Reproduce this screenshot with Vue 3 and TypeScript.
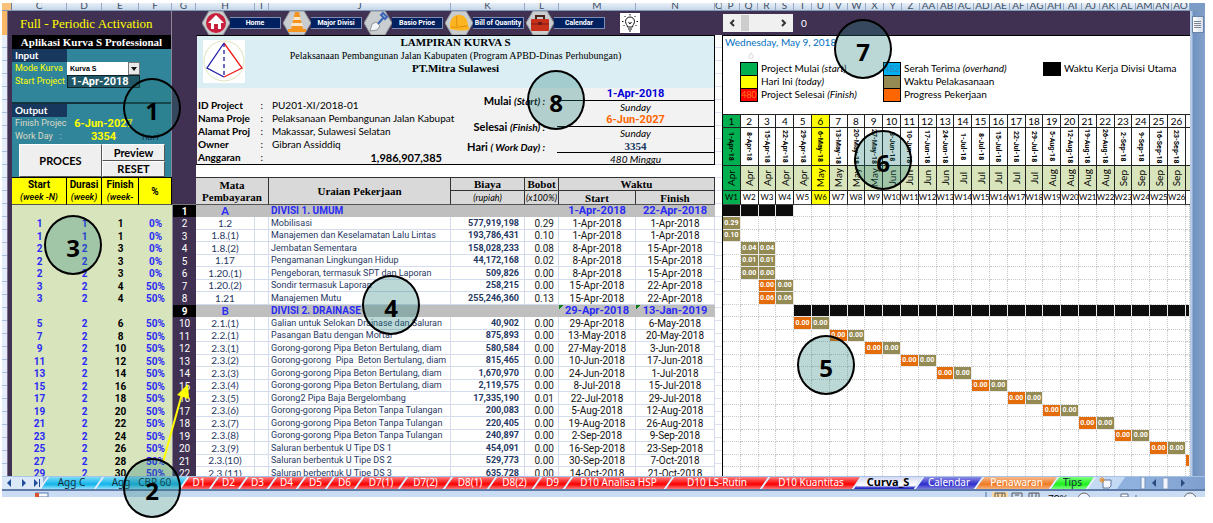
<script setup lang="ts">
import { ref } from 'vue'

interface Row {
  no: number
  start?: number
  weeks?: number
  finish?: number
  pct?: string
  code: string
  name: string
  cost?: string
  weight?: string
  from: string
  to: string
  division?: boolean
  flagged?: boolean
}

const pipe = 'Gorong-gorong Pipa Beton Bertulang, diam'
const plainPipe = 'Gorong-gorong Pipa Beton Tanpa Tulangan'

const rows: Row[] = [
  { no: 1, code: 'A', name: 'DIVISI 1. UMUM', from: '1-Apr-2018', to: '22-Apr-2018', division: true },
  { no: 2, start: 1, weeks: 1, finish: 1, pct: '0%', code: '1.2', name: 'Mobilisasi', cost: '577,919,198', weight: '0.29', from: '1-Apr-2018', to: '1-Apr-2018' },
  { no: 3, start: 1, weeks: 1, finish: 1, pct: '0%', code: '1.8.(1)', name: 'Manajemen dan Keselamatan Lalu Lintas', cost: '193,786,431', weight: '0.10', from: '1-Apr-2018', to: '1-Apr-2018' },
  { no: 4, start: 2, weeks: 2, finish: 3, pct: '0%', code: '1.8.(2)', name: 'Jembatan Sementara', cost: '158,028,233', weight: '0.08', from: '8-Apr-2018', to: '15-Apr-2018' },
  { no: 5, start: 2, weeks: 2, finish: 3, pct: '0%', code: '1.17', name: 'Pengamanan Lingkungan Hidup', cost: '44,172,168', weight: '0.02', from: '8-Apr-2018', to: '15-Apr-2018' },
  { no: 6, start: 2, weeks: 2, finish: 3, pct: '0%', code: '1.20.(1)', name: 'Pengeboran, termasuk SPT dan Laporan', cost: '509,826', weight: '0.00', from: '8-Apr-2018', to: '15-Apr-2018' },
  { no: 7, start: 3, weeks: 2, finish: 4, pct: '50%', code: '1.20.(2)', name: 'Sondir termasuk Laporan', cost: '258,215', weight: '0.00', from: '15-Apr-2018', to: '22-Apr-2018' },
  { no: 8, start: 3, weeks: 2, finish: 4, pct: '50%', code: '1.21', name: 'Manajemen Mutu', cost: '255,246,360', weight: '0.13', from: '15-Apr-2018', to: '22-Apr-2018' },
  { no: 9, code: 'B', name: 'DIVISI 2. DRAINASE', from: '29-Apr-2018', to: '13-Jan-2019', division: true, flagged: true },
  { no: 10, start: 5, weeks: 2, finish: 6, pct: '50%', code: '2.1.(1)', name: 'Galian untuk Selokan Drainase dan Saluran', cost: '40,902', weight: '0.00', from: '29-Apr-2018', to: '6-May-2018' },
  { no: 11, start: 7, weeks: 2, finish: 8, pct: '50%', code: '2.2.(1)', name: 'Pasangan Batu dengan Mortar', cost: '875,893', weight: '0.00', from: '13-May-2018', to: '20-May-2018' },
  { no: 12, start: 9, weeks: 2, finish: 10, pct: '50%', code: '2.3.(1)', name: pipe, cost: '580,584', weight: '0.00', from: '27-May-2018', to: '3-Jun-2018' },
  { no: 13, start: 11, weeks: 2, finish: 12, pct: '50%', code: '2.3.(2)', name: 'Gorong-gorong  Pipa  Beton Bertulang, diam', cost: '815,465', weight: '0.00', from: '10-Jun-2018', to: '17-Jun-2018' },
  { no: 14, start: 13, weeks: 2, finish: 14, pct: '50%', code: '2.3.(3)', name: pipe, cost: '1,670,970', weight: '0.00', from: '24-Jun-2018', to: '1-Jul-2018' },
  { no: 15, start: 15, weeks: 2, finish: 16, pct: '50%', code: '2.3.(4)', name: pipe, cost: '2,119,575', weight: '0.00', from: '8-Jul-2018', to: '15-Jul-2018' },
  { no: 16, start: 17, weeks: 2, finish: 18, pct: '50%', code: '2.3.(5)', name: 'Gorong2 Pipa Baja Bergelombang', cost: '17,335,190', weight: '0.01', from: '22-Jul-2018', to: '29-Jul-2018' },
  { no: 17, start: 19, weeks: 2, finish: 20, pct: '50%', code: '2.3.(6)', name: plainPipe, cost: '200,083', weight: '0.00', from: '5-Aug-2018', to: '12-Aug-2018' },
  { no: 18, start: 21, weeks: 2, finish: 22, pct: '50%', code: '2.3.(7)', name: plainPipe, cost: '220,405', weight: '0.00', from: '19-Aug-2018', to: '26-Aug-2018' },
  { no: 19, start: 23, weeks: 2, finish: 24, pct: '50%', code: '2.3.(8)', name: plainPipe, cost: '240,897', weight: '0.00', from: '2-Sep-2018', to: '9-Sep-2018' },
  { no: 20, start: 25, weeks: 2, finish: 26, pct: '50%', code: '2.3.(9)', name: 'Saluran berbentuk U Tipe DS 1', cost: '454,091', weight: '0.00', from: '16-Sep-2018', to: '23-Sep-2018' },
  { no: 21, start: 27, weeks: 2, finish: 28, pct: '50%', code: '2.3.(10)', name: 'Saluran berbentuk U Tipe DS 2', cost: '529,773', weight: '0.00', from: '30-Sep-2018', to: '7-Oct-2018' },
  { no: 22, start: 29, weeks: 2, finish: 30, pct: '50%', code: '2.3.(11)', name: 'Saluran berbentuk U Tipe DS 3', cost: '635,728', weight: '0.00', from: '14-Oct-2018', to: '21-Oct-2018' },
]

const monthNames = ['Jan', 'Feb', 'Mar', 'Apr', 'May', 'Jun', 'Jul', 'Aug', 'Sep', 'Oct', 'Nov', 'Dec']

const weeks = Array.from({ length: 26 }, (_, i) => {
  const d = new Date(Date.UTC(2018, 3, 1 + i * 7))
  const month = monthNames[d.getUTCMonth()]
  return {
    n: i + 1,
    date: `${d.getUTCDate()}-${month}-18`,
    month,
    tone: i === 0 ? 'begin' : i === 5 ? 'today' : '',
  }
})

const shares: Record<number, string> = { 2: '0.29', 3: '0.10', 4: '0.04', 5: '0.01', 8: '0.06' }

function barKind(row: Row, week: number): string {
  if (row.no === 1) return week <= 4 ? 'main' : ''
  if (row.no === 9) return week >= 5 ? 'main' : ''
  if (row.start === undefined || row.finish === undefined) return ''
  if (week < row.start || week > row.finish) return ''
  return row.pct === '50%' && week === row.start ? 'progress' : 'plan'
}

function barText(row: Row, week: number): string {
  const kind = barKind(row, week)
  return kind === 'plan' || (kind === 'progress' && week <= 26) ? (shares[row.no] ?? '0.00') : ''
}

const weekLetters = [...'PQRSTUVWXYZ', ...[...'ABCDEFGHIJKLMNO'].map((c) => 'A' + c)]

const tabs = [
  { label: 'Agg C', kind: 'cyan', width: 55 },
  { label: 'Agg   CBR 60', kind: 'cyan', width: 85 },
  { label: 'D1', kind: 'red', width: 30 },
  { label: 'D2', kind: 'red', width: 29 },
  { label: 'D3', kind: 'red', width: 29 },
  { label: 'D4', kind: 'red', width: 29 },
  { label: 'D5', kind: 'red', width: 29 },
  { label: 'D6', kind: 'red', width: 29 },
  { label: 'D7(1)', kind: 'red', width: 44 },
  { label: 'D7(2)', kind: 'red', width: 45 },
  { label: 'D8(1)', kind: 'red', width: 44 },
  { label: 'D8(2)', kind: 'red', width: 45 },
  { label: 'D9', kind: 'red', width: 31 },
  { label: 'D10 Analisa HSP', kind: 'red', width: 101 },
  { label: 'D10 LS-Rutin', kind: 'red', width: 96 },
  { label: 'D10 Kuantitas', kind: 'red', width: 92 },
  { label: 'Curva_S', kind: 'current', width: 62 },
  { label: 'Calendar', kind: 'blue', width: 60 },
  { label: 'Penawaran', kind: 'orange', width: 75 },
  { label: 'Tips', kind: 'green', width: 37 },
]

const callouts = [
  { n: 1, x: 152, y: 108 },
  { n: 2, x: 152, y: 488 },
  { n: 3, x: 73, y: 245 },
  { n: 4, x: 391, y: 305 },
  { n: 5, x: 826, y: 365 },
  { n: 6, x: 883, y: 160 },
  { n: 7, x: 863, y: 49 },
  { n: 8, x: 556, y: 100 },
]

const mode = ref('Kurva S')
</script>

<template>
  <main class="page">
    <div class="window">
      <div class="letters" aria-hidden="true">
        <div class="corner"></div>
        <div class="set left">
          <span class="c55">C</span><span class="c35">D</span><span class="c37">E</span><span class="c33">F</span><span class="grow">G</span>
        </div>
        <div class="set">
          <span class="c59">H</span><span class="c14">I</span><span class="grow">J</span><span class="c74">K</span><span class="c34">L</span><span class="c77">M</span><span class="c79">N</span>
        </div>
        <div class="set"><span class="grow">O</span></div>
        <div class="set weeks"><span v-for="l in weekLetters" :key="l" class="grow">{{ l }}</span></div>
        <div class="scroll-top"></div>
      </div>

      <div class="sheet">
        <div class="gutter">
          <div class="picked"></div>
          <i v-for="n in 36" :key="n"></i>
        </div>
        <div class="strip"></div>

        <section class="control">
          <div class="panel">
            <h1>Full - Periodic Activation</h1>
            <h2>Aplikasi Kurva S Professional</h2>
            <div class="form">
              <div class="caption">Input</div>
              <div class="field">
                <label for="mode">Mode Kurva</label>
                <div class="combo">
                  <select id="mode" v-model="mode"><option>Kurva S</option></select>
                  <span class="drop"><svg viewBox="0 0 6 4" width="6" height="4"><path d="M0 0H6L3 4Z" fill="#111" /></svg></span>
                </div>
              </div>
              <div class="field">
                <label for="begin">Start Project</label>
                <input id="begin" class="date" type="text" value="1-Apr-2018" />
              </div>
            </div>
            <div class="form out">
              <div class="caption">Output</div>
              <div class="field"><span class="pale">Finish Projec</span><b class="result">6-Jun-2027</b></div>
              <div class="field"><span class="pale">Work Day &nbsp; :</span><b class="result">3354</b><span class="unit">hari</span></div>
            </div>
            <div class="actions">
              <button class="proces" type="button">PROCES</button>
              <button type="button">Preview</button>
              <button type="button">RESET</button>
            </div>
          </div>
          <table class="plan-table">
            <colgroup><col class="c55" /><col class="c35" /><col class="c37" /><col class="c33" /><col /></colgroup>
            <thead>
              <tr>
                <th>Start<em>(week -N)</em></th>
                <th>Durasi<em>(week)</em></th>
                <th>Finish<em>(week-</em></th>
                <th>%</th>
                <td class="blank"></td>
              </tr>
            </thead>
            <tbody>
              <tr v-for="r in rows" :key="r.no">
                <td>{{ r.start }}</td>
                <td>{{ r.weeks }}</td>
                <td class="ink">{{ r.finish }}</td>
                <td>{{ r.pct }}</td>
                <th scope="row" :class="{ dark: r.division }">{{ r.no }}</th>
              </tr>
            </tbody>
          </table>
        </section>

        <section class="work">
          <nav class="bar">
            <button type="button" class="nav">
              <svg viewBox="0 0 28 24"><path class="hex" d="M7 0H21L28 12L21 24H7L0 12Z" /><circle cx="14" cy="12" r="10" fill="#c8203c" /><path d="M6 12L14 4L22 12H19V18H16V13H12V18H9V12Z" fill="#fff" /></svg>
              <span>Home</span>
            </button>
            <button type="button" class="nav">
              <svg viewBox="0 0 28 24"><path class="hex" d="M7 0H21L28 12L21 24H7L0 12Z" /><path d="M12 1H16L20 18H23V21H5V18H8Z" fill="#f7941e" /><path d="M11 6H17L18 9H10ZM9 12H19L20 15H8Z" fill="#fbe6c8" /></svg>
              <span>Major Divisi</span>
            </button>
            <button type="button" class="nav">
              <svg viewBox="0 0 28 24"><path class="hex" d="M7 0H21L28 12L21 24H7L0 12Z" /><path d="M13 14L20 6M17 4L19 2L23 6L21 8Z" stroke="#3a66b8" stroke-width="2" fill="none" /><path d="M6 20L8 13L12 11L16 15L13 19Z" fill="#f2f4f6" stroke="#8d969c" /></svg>
              <span>Basio Prioe</span>
            </button>
            <button type="button" class="nav">
              <svg viewBox="0 0 28 24"><path class="hex" d="M7 0H21L28 12L21 24H7L0 12Z" /><path d="M5 16C4 0 23 0 23 15L25 18C18 21 10 19 5 18Z" fill="#fcb521" /><path d="M12 5C11 9 12 12 12 15M6 16C12 17 18 15 23 15" stroke="#de8d0b" fill="none" /></svg>
              <span>Bill of Quantity</span>
            </button>
            <button type="button" class="nav">
              <svg viewBox="0 0 28 24"><path class="hex" d="M7 0H21L28 12L21 24H7L0 12Z" /><path d="M10 8V5H18V8" stroke="#46251c" stroke-width="2" fill="none" /><rect x="5" y="8" width="18" height="12" rx="1" fill="#c9301c" /><path d="M5 13H23" stroke="#7c1a10" /><rect x="12" y="11" width="4" height="3" fill="#6a1a12" /></svg>
              <span>Calendar</span>
            </button>
            <button type="button" class="bulb" aria-label="Tips">
              <svg viewBox="0 0 20 20" fill="none" stroke="#111"><path d="M7.500 14C7.500 12 5.500 11 5.500 8.500A4.500 4.500 0 0 1 14.500 8.500C14.500 11 12.500 12 12.500 14ZM8 16H12M9 18H11M8.500 9L10 11L11.500 9" /><path d="M10 1V2.500M4.500 3L5.500 4M15.500 3L14.500 4M2 8.500H3.500M16.500 8.500H18M3.500 13L4.500 12M16.500 13L15.500 12" /></svg>
            </button>
          </nav>

          <div class="info">
            <header class="head">
              <svg class="logo" viewBox="0 0 42 43"><rect width="42" height="43" fill="#fff" /><circle cx="21" cy="21" r="20" fill="none" stroke="#dbe5b9" /><path d="M21 3L4 28L21 37" fill="none" stroke="#1d1da8" stroke-width="1.300" /><path d="M21 3L39 28L21 37" fill="none" stroke="#ee1c1c" stroke-width="1.300" /><path d="M21 3V37" stroke="#1d1da8" stroke-width="1.300" stroke-dasharray="4 3" /></svg>
              <div class="titles">
                <strong>LAMPIRAN KURVA S</strong>
                <span>Pelaksanaan Pembangunan Jalan Kabupaten (Program APBD-Dinas Perhubungan)</span>
                <strong>PT.Mitra Sulawesi</strong>
              </div>
            </header>
            <div class="facts">
              <dl>
                <dt>ID Project</dt><dd>PU201-XI/2018-01</dd>
                <dt>Nama Proje</dt><dd>Pelaksanaan Pembangunan Jalan Kabupat</dd>
                <dt>Alamat Proj</dt><dd>Makassar, Sulawesi Selatan</dd>
                <dt>Owner</dt><dd>Gibran Assiddiq</dd>
                <dt>Anggaran</dt><dd class="sum">1,986,907,385</dd>
              </dl>
              <div class="span-dates">
                <b class="tag">Mulai <em>(Start) :</em></b>
                <b class="line blue">1-Apr-2018</b>
                <em class="note">Sunday</em>
                <b class="tag">Selesai <em>(Finish) :</em></b>
                <b class="line fire">6-Jun-2027</b>
                <em class="note">Sunday</em>
                <b class="tag one">Hari <em>( Work Day) :</em></b>
                <b class="line serif">3354</b>
                <em class="note">480 Minggu</em>
              </div>
            </div>
          </div>

          <table class="work-table">
            <colgroup><col class="c59" /><col class="c14" /><col /><col class="c74" /><col class="c34" /><col class="c77" /><col class="c79" /></colgroup>
            <thead>
              <tr>
                <th rowspan="2" colspan="2">Mata Pembayaran</th>
                <th rowspan="2">Uraian Pekerjaan</th>
                <th>Biaya</th>
                <th>Bobot</th>
                <th colspan="2">Waktu</th>
              </tr>
              <tr>
                <th class="sub">(rupiah)</th>
                <th class="sub">(x100%)</th>
                <th>Start</th>
                <th>Finish</th>
              </tr>
            </thead>
            <tbody>
              <tr v-for="r in rows" :key="r.no" :class="{ division: r.division, flagged: r.flagged }">
                <td>{{ r.code }}</td>
                <td></td>
                <td class="name">{{ r.name }}</td>
                <td class="cost">{{ r.cost }}</td>
                <td class="weight">{{ r.weight }}</td>
                <td class="when">{{ r.from }}</td>
                <td class="when">{{ r.to }}</td>
              </tr>
            </tbody>
          </table>
        </section>

        <div class="gap"><i v-for="n in 36" :key="n"></i></div>

        <section class="gantt">
          <div class="bar">
            <div class="spin">
              <button type="button" aria-label="Back"><svg viewBox="0 0 6 8"><path d="M5 1L2 4L5 7" /></svg></button>
              <span class="thumb"></span>
              <button type="button" aria-label="Forward"><svg viewBox="0 0 6 8"><path d="M1 1L4 4L1 7" /></svg></button>
            </div>
            <span class="zero">0</span>
          </div>
          <div class="key">
            <div class="today-date">Wednesday, May 9, 2018</div>
            <div class="count">6</div>
            <div class="legend">
              <ul>
                <li><i class="k-green"></i>Project Mulai&nbsp;<em>(start)</em></li>
                <li><i class="k-yellow"></i>Hari Ini&nbsp;<em>(today)</em></li>
                <li><i class="k-red">480</i>Project Selesai&nbsp;<em>(Finish)</em></li>
              </ul>
              <ul>
                <li><i class="k-sky">482</i>Serah Terima&nbsp;<em>(overhand)</em></li>
                <li><i class="k-olive"></i>Waktu Pelakasanaan</li>
                <li><i class="k-orange"></i>Progress Pekerjaan</li>
              </ul>
              <ul>
                <li><i class="k-black"></i>Waktu Kerja Divisi Utama</li>
              </ul>
            </div>
          </div>
          <table class="gantt-table">
            <colgroup><col v-for="w in weeks" :key="w.n" /><col class="c4" /></colgroup>
            <thead>
              <tr class="h-num"><th v-for="w in weeks" :key="w.n" :class="w.tone">{{ w.n }}</th><td></td></tr>
              <tr class="h-date"><th v-for="w in weeks" :key="w.n" :class="w.tone"><span>{{ w.date }}</span></th><td></td></tr>
              <tr class="h-month"><th v-for="w in weeks" :key="w.n" :class="w.tone"><span>{{ w.month }}</span></th><td></td></tr>
              <tr class="h-week"><th v-for="w in weeks" :key="w.n" :class="w.tone">W{{ w.n }}</th><td></td></tr>
            </thead>
            <tbody>
              <tr v-for="r in rows" :key="r.no">
                <td v-for="n in 27" :key="n" :class="barKind(r, n)">{{ barText(r, n) }}</td>
              </tr>
            </tbody>
          </table>
        </section>

        <div class="vscroll">
          <div class="grip"><svg viewBox="0 0 7 7"><path d="M0 0.500H7M0 2.500H7M0 4.500H7M0 6.500H7" stroke="#7e8796" /></svg></div>
          <svg class="down" viewBox="0 0 8 4"><path d="M0 0H8L4 4Z" fill="#3d4f7c" /></svg>
        </div>
      </div>

      <div class="tabs">
        <div class="arrows">
          <svg viewBox="0 0 36 8" fill="#1f4e96"><path d="M6 0V8L2 4ZM17 0V8L21 4ZM29 0V8L33 4ZM34 0H35V8H34Z" /></svg>
        </div>
        <button v-for="t in tabs" :key="t.label" type="button" class="tab" :class="t.kind" :style="{ flexBasis: t.width + 'px' }"><span>{{ t.label }}</span></button>
        <button type="button" class="tab add" aria-label="New sheet">
          <svg viewBox="0 0 14 12"><path d="M4 3H12V9L10 11H4Z" fill="#f5f9ff" stroke="#5d7299" /><path d="M3 0V6M0 3H6M1 1L5 5M5 1L1 5" stroke="#e8902c" /></svg>
        </button>
        <div class="hscroll">
          <svg viewBox="0 0 48 12"><rect x="1" y="0" width="4" height="12" fill="#eef4fc" stroke="#7890b8" /><path d="M16 2V10L12 6ZM41 2V10L45 6Z" fill="#2f4a80" /><rect x="23" y="1" width="5" height="11" fill="#f2f6fc" stroke="#8ea2c4" /></svg>
        </div>
      </div>

      <footer class="status">
        <svg class="macro" viewBox="0 0 14 5"><rect x="0" y="1" width="13" height="4" fill="#f6f8fc" stroke="#5a7bb5" /><path d="M0 3H4" stroke="#d8532b" stroke-width="4" /></svg>
        <div class="views">
          <svg viewBox="0 0 50 5"><rect width="16" height="5" fill="#fbd9a0" /><path d="M3 5V1H13V5M6 1V5M10 1V5M20 5V1H30V5M23 3H27M37 5V1H47V5M40 1V5M44 1V5" fill="none" stroke="#555" /></svg>
          <span class="pct">70%</span>
          <svg class="zoomer" viewBox="0 0 124 5"><circle cx="8" cy="7" r="6" fill="#eef4fd" stroke="#666" /><path d="M45 2H52V5H45ZM60 3V5" fill="#fff" stroke="#5a6f92" /><circle cx="114" cy="7" r="6" fill="#eef4fd" stroke="#666" /></svg>
        </div>
      </footer>
    </div>

    <svg class="pointer" viewBox="0 0 34 82"><path d="M6 80L25 12" stroke="#ffff00" stroke-width="2" /><path d="M31 2L20 13L32 17Z" fill="#ffff00" /></svg>
    <div v-for="c in callouts" :key="c.n" class="callout" :style="{ left: c.x - 29 + 'px', top: c.y - 30 + 'px' }">{{ c.n }}</div>
  </main>
</template>

<style>
body {
  margin: 0;
  background: #fff;
}
</style>

<style scoped>
* {
  box-sizing: border-box;
}
.page {
  position: relative;
  padding: 3px 8px 26px 2px;
  font: 10px/13px Lato, "Liberation Sans", sans-serif;
  color: #000;
}
button,
select,
input {
  font: inherit;
  padding: 0;
  margin: 0;
  border: 0;
  color: inherit;
}
h1,
h2,
ul,
dl,
dd {
  margin: 0;
  padding: 0;
}
i {
  font-style: normal;
}
svg {
  display: block;
}
.letters,
.sheet {
  display: grid;
  grid-template-columns: 5px 5px 184px minmax(0, 519fr) 7px minmax(0, 468fr) 15px;
}
.letters {
  height: 8px;
  overflow: hidden;
  background: linear-gradient(#e9f0f8, #c6d6e8);
  border-bottom: 1px solid #8297b5;
  color: #3c4f66;
}
.corner {
  grid-column: span 2;
  background: #f9c27c;
  border-right: 1px solid #6d7f98;
}
.set {
  display: flex;
  align-items: flex-end;
  height: 9px;
}
.set span {
  flex: none;
  overflow: hidden;
  height: 9px;
  line-height: 5px;
  text-align: center;
  border-right: 1px solid #94a8c4;
}
.set .grow {
  flex: 1 1 0;
  min-width: 0;
}
.scroll-top {
  background: #7c9cc8;
}
.c4 { width: 4px; }
.c14 { width: 14px; }
.c33 { width: 33px; }
.c34 { width: 34px; }
.c35 { width: 35px; }
.c37 { width: 37px; }
.c55 { width: 55px; }
.c59 { width: 59px; }
.c74 { width: 74px; }
.c77 { width: 77px; }
.c79 { width: 79px; }

.sheet {
  height: 465px;
  overflow: hidden;
}
.gutter,
.gap {
  display: flex;
  flex-direction: column;
}
.gutter {
  background: #e6eff9;
}
.picked {
  flex: none;
  height: 24px;
  background: #f9b865;
}
.gutter i,
.gap i {
  flex: none;
  height: 13px;
  border-bottom: 1px solid #a9bfdb;
}
.gap i {
  border-color: #dbe3f1;
}
.gap {
  background: #fff;
  border-top: 24px solid #403152;
}
.strip {
  background: #403152;
  border-left: 1px solid #7a6e88;
}

.control {
  background: #403152;
}
.panel {
  width: 160px;
  border-right: 1px solid #8b8598;
}
h1 {
  height: 24px;
  padding-left: 8px;
  font: 13px/26px "Liberation Serif", serif;
  color: #ffff00;
  white-space: nowrap;
}
h2 {
  height: 14px;
  background: #000;
  color: #fff;
  font: bold 11px/15px "Liberation Serif", serif;
  text-align: center;
  white-space: nowrap;
}
.form {
  height: 53px;
  background: #31859b;
}
.form.out {
  height: 42px;
  border-top: 2px solid #14323b;
}
.caption {
  width: 55px;
  height: 13px;
  padding-left: 3px;
  background: #17375d;
  color: #fff;
  font-weight: bold;
}
.field {
  display: flex;
  height: 13px;
  color: #ffff00;
  white-space: nowrap;
}
.field label,
.pale {
  flex: none;
  width: 55px;
  padding-left: 3px;
  font-family: Roboto, sans-serif;
  font-size: 9px;
}
.pale {
  color: #ddd9c3;
}
.combo {
  display: flex;
  width: 73px;
  height: 13px;
  background: #fff;
}
select {
  flex: 1;
  min-width: 0;
  padding-left: 3px;
  appearance: none;
  background: #fff;
  color: #000;
  font: bold 7px/13px "Liberation Sans", sans-serif;
}
.drop {
  display: grid;
  place-items: center;
  width: 12px;
  background: #e9e9e9;
  border: 1px solid #777;
}
.date {
  width: 73px;
  height: 13px;
  padding-left: 3px;
  background: #205867;
  border: 1px solid #10242b;
  color: #fff;
  font: bold 11px/11px Roboto, sans-serif;
}
.result {
  width: 73px;
  font-family: Roboto, sans-serif;
  font-size: 11px;
  text-align: center;
}
.unit {
  padding-left: 2px;
  color: #17375d;
}
.actions {
  display: grid;
  grid-template: 17px 16px / 83px 63px;
  padding-left: 7px;
  background: #31859b;
}
.actions button {
  background: #efefef;
  border: 1px solid #fff;
  border-right-color: #555;
  border-bottom-color: #555;
  font-weight: bold;
  font-size: 11px;
  line-height: 12px;
}
.actions .proces {
  grid-row: span 2;
}

table {
  width: 100%;
  table-layout: fixed;
  border-collapse: separate;
  border-spacing: 0;
}
td,
th {
  padding: 0;
  line-height: 11px;
  overflow: hidden;
  white-space: nowrap;
  text-align: center;
}
tbody tr:nth-child(odd) {
  height: 12px;
}
tbody tr:nth-child(even) {
  height: 13px;
}
.plan-table {
  font-family: Roboto, "Liberation Sans", sans-serif;
}
.plan-table tbody {
  background: #d8e4bc;
  color: #2a2af5;
  font-weight: bold;
}
.plan-table thead tr {
  height: 28px;
}
.plan-table thead th {
  height: 28px;
  background: #ffff00;
  border-right: 1px solid #000;
  border-bottom: 1px solid #555;
  border-top: 1px solid #000;
  line-height: 13px;
}
.plan-table em {
  display: block;
  font-weight: 500;
  font-size: 9px;
}
.blank {
  border-bottom: 1px solid #777;
}
.plan-table .ink {
  color: #000;
}
.plan-table tbody th {
  background: #403152;
  border-left: 1px solid #8b8598;
  color: #fff;
  font-weight: normal;
}
.plan-table tbody th.dark {
  background: #000;
  font-weight: bold;
}

.bar {
  display: flex;
  align-items: center;
  height: 24px;
  background: #403152;
}
.work .bar {
  gap: 2px;
  padding-left: 6px;
}
.nav {
  display: flex;
  flex: none;
  align-items: center;
  width: 79px;
  height: 24px;
  background: none;
  overflow: hidden;
}
.nav svg {
  flex: none;
  width: 28px;
  height: 24px;
}
.hex {
  fill: #c9cdd0;
  stroke: #8e9499;
}
.nav span {
  flex: 1;
  min-width: 0;
  height: 12px;
  background: #002060;
  border: 1px solid #7d8eb4;
  border-left: 0;
  color: #fff;
  font: bold 7px/10px Roboto, "Liberation Sans", sans-serif;
  white-space: nowrap;
}
.bulb {
  flex: none;
  width: 20px;
  height: 20px;
  margin-left: 13px;
  background: #fff;
}
.info {
  height: 130px;
  border: 1px solid #000;
  border-left-color: #403152;
  background: #f2f2f2;
}
.head {
  display: flex;
  height: 52px;
  padding: 4px 6px;
  background: #daeef3;
}
.logo {
  flex: none;
  width: 42px;
  height: 43px;
}
.titles {
  display: flex;
  flex: 1;
  flex-direction: column;
  margin: -4px 42px 0 0;
  font: 10px/13px "Liberation Serif", serif;
  text-align: center;
  white-space: nowrap;
}
.titles strong {
  font-size: 11px;
}
.facts {
  display: grid;
  grid-template-columns: minmax(0, 1fr) 264px;
}
dl {
  display: grid;
  grid-template-columns: 72px minmax(0, 1fr);
  align-content: start;
  padding-top: 11px;
  white-space: nowrap;
}
dt {
  display: flex;
  justify-content: space-between;
  padding: 0 6px 0 1px;
  font-weight: bold;
}
dt::after {
  content: ":";
  font-weight: normal;
}
dd {
  padding-left: 3px;
}
.sum {
  padding-right: 8px;
  font-weight: bold;
  font-size: 11px;
  text-align: right;
}
.span-dates {
  display: grid;
  grid-template-columns: 107px minmax(0, 1fr);
  grid-template-rows: repeat(5, 13px) 11px;
  text-align: center;
}
.tag {
  grid-row: span 2;
  padding: 0 12px 0 4px;
  font-size: 11px;
  line-height: 26px;
  text-align: right;
  white-space: nowrap;
}
.tag em {
  font-size: 10px;
}
.tag.one {
  line-height: 13px;
}
.line {
  border-bottom: 1px solid #000;
  font-family: Roboto, sans-serif;
  font-size: 11px;
  line-height: 12px;
}
.blue {
  color: #0000d8;
}
.fire {
  color: #ff6600;
}
.line.serif {
  color: #17375d;
  font-family: "Liberation Serif", serif;
}
.note {
  line-height: 12px;
}
.work-table {
  border-top: 12px solid #fff;
}
.work-table thead th {
  background: #d9d9d9;
  border-right: 1px solid #333;
  border-top: 1px solid #333;
  font: bold 11px/12px "Liberation Serif", serif;
  white-space: normal;
}
.work-table thead tr:first-child {
  height: 13px;
}
.work-table thead tr:last-child {
  height: 15px;
}
.work-table thead th[rowspan],
.work-table thead tr:last-child th {
  border-bottom: 1px solid #555;
}
.work-table thead .sub {
  font: italic 9px/12px Lato, sans-serif;
}
.work-table td {
  background: #fff;
  border-right: 1px solid #d3dbec;
  border-bottom: 1px solid #d3dbec;
  color: #1f3864;
}
.work-table .name {
  padding-left: 2px;
  text-align: left;
  font-family: Roboto, sans-serif;
  font-size: 9px;
  white-space: pre;
}
.work-table .cost {
  padding-right: 5px;
  text-align: right;
  font-family: Roboto, sans-serif;
  font-weight: bold;
  font-size: 9px;
}
.work-table .weight {
  padding-right: 4px;
  text-align: right;
  font-family: Roboto, sans-serif;
  color: #222;
}
.work-table .when {
  font-family: Roboto, sans-serif;
  color: #111;
}
.work-table .division td {
  background: #bfbfbf;
  border-color: #bfbfbf;
  color: #2a2af5;
  font-weight: bold;
  font-size: 11px;
}
.work-table .division .name {
  font-size: 10px;
}
.work-table .flagged .when {
  background: linear-gradient(135deg, #0a7d16 3px, #bfbfbf 3px);
}

.gantt {
  background: #fff;
}
.spin {
  display: flex;
  align-items: center;
  width: 70px;
  height: 18px;
  margin-left: 1px;
  background: #f0f0f0;
}
.spin button {
  width: 18px;
  height: 18px;
  background: none;
}
.spin svg {
  width: 6px;
  height: 8px;
  margin: auto;
  fill: none;
  stroke: #333;
  stroke-width: 2px;
}
.thumb {
  width: 8px;
  height: 16px;
  margin-right: auto;
  background: #cdcdcd;
}
.zero {
  padding-left: 8px;
  color: #fff;
}
.key {
  height: 79px;
  border-top: 1px solid #000;
  border-left: 1px solid #000;
  white-space: nowrap;
}
.today-date {
  padding-left: 2px;
  color: #0070c0;
}
.count {
  padding-left: 25px;
  color: #d9d9d9;
}
.legend {
  display: grid;
  grid-template-columns: 143px 160px 1fr;
  padding-left: 17px;
}
ul {
  list-style: none;
}
li {
  display: flex;
  height: 13px;
}
li i {
  width: 18px;
  height: 14px;
  margin-right: 3px;
  border: 1px solid #000;
  font-size: 9px;
  line-height: 12px;
  text-align: center;
}
.k-green { background: #00b050; }
.k-yellow { background: #ffff00; }
.k-red { background: #ff0000; color: #ff7b1a; }
.k-sky { background: #00b0f0; color: #2f86b8; }
.k-olive { background: #948a54; }
.k-orange { background: #ff6600; }
.k-black { background: #000; }

.gantt-table {
  border-left: 1px solid #000;
}
.gantt-table thead th,
.gantt-table thead td {
  border-right: 1px solid #222;
  border-top: 1px solid #222;
  font-weight: normal;
}
.gantt-table thead td {
  border-right: 0;
}
.h-num { height: 13px; }
.h-date { height: 38px; }
.h-month { height: 25px; }
.h-week { height: 15px; }
.h-date span,
.h-month span {
  display: block;
  margin: auto;
  writing-mode: vertical-rl;
  line-height: 12px;
}
.h-date span {
  font-family: Roboto, sans-serif;
  font-weight: bold;
  font-size: 7px;
}
.h-month span {
  font-size: 10px;
  transform: rotate(180deg);
}
.gantt-table .h-month th,
.gantt-table .h-month td {
  background: #d8e4bc;
}
.gantt-table .h-week th,
.gantt-table .h-week td {
  border-bottom: 1px solid #444;
  font-size: 8px;
}
.gantt-table thead th.begin {
  background: #00b050;
}
.gantt-table thead th.today {
  background: #ffff00;
}
.gantt-table tbody td {
  border-right: 1px dotted #c9c9c9;
  border-bottom: 1px dotted #c9c9c9;
  color: #fff;
  font-family: Roboto, sans-serif;
  font-weight: bold;
  font-size: 7px;
}
.gantt-table tbody .main,
.gantt-table tbody .plan,
.gantt-table tbody .progress {
  border-right: 1px solid #e8e8e8;
  border-bottom: 1px solid #e8e8e8;
}
.gantt-table tbody .main { background: #0d0d0d; }
.gantt-table tbody .plan { background: #948a54; }
.gantt-table tbody .progress { background: #e46c0a; }

.vscroll {
  display: flex;
  flex-direction: column;
  align-items: center;
  justify-content: space-between;
  padding: 5px 0 6px;
  background: linear-gradient(90deg, #b8cbe6 0 2px, #6f92c0 3px, #86a0cb);
}
.grip {
  display: grid;
  place-items: center;
  width: 12px;
  height: 17px;
  background: linear-gradient(90deg, #fff, #d6dfec);
  border: 1px solid #6c83a8;
}
.grip svg {
  width: 7px;
  height: 7px;
}
.down {
  width: 8px;
  height: 4px;
}

.tabs {
  display: flex;
  height: 15px;
  overflow: hidden;
  background: #8fb1dd;
  border-top: 1px solid #a9c3e6;
  border-bottom: 2px solid #5f7ba8;
  font: 10px/10px "Noto Sans", "DejaVu Sans", sans-serif;
}
.arrows {
  display: grid;
  flex: none;
  place-items: center;
  width: 41px;
  background: #dbe8f8;
}
.arrows svg {
  width: 36px;
  height: 8px;
}
.tab {
  position: relative;
  z-index: 0;
  flex: 0 1 auto;
  height: 12px;
  padding-bottom: 2px;
  background: none;
  color: #fff;
  line-height: 10px;
  white-space: pre;
}
.tab::before {
  content: "";
  position: absolute;
  z-index: -1;
  inset: 0;
  border-left: 2px solid #e8f1fc;
  transform: skewX(-35deg);
}
.tab span {
  padding-left: 2px;
}
.cyan::before { background: linear-gradient(#7fdcf8, #12b4ea 60%, #8fe2fa); }
.red::before { background: linear-gradient(#ff8080, #ff3a3a 30%, #fa0000 60%, #ff7676); }
.current::before { background: linear-gradient(#d4d8f4, #fff 70%, #2a2ac8 90%); }
.blue.tab { color: #fff; }
.blue::before { background: linear-gradient(#8c8ce4, #2e2ecb 60%, #7d7de0); }
.orange::before { background: linear-gradient(#f9b98a, #ee7a22 60%, #f8b27e); }
.green::before { background: linear-gradient(#7dff7d, #1cf01c 60%, #7dff7d); }
.add::before { background: #c4d9f4; }
.tab.cyan,
.tab.green {
  color: #14303c;
}
.tab.current {
  color: #000;
  font-weight: bold;
  font-size: 11px;
}
.tab.add {
  flex: 0 0 31px;
  padding: 0;
}
.add svg {
  width: 14px;
  height: 12px;
  margin: auto;
}
.hscroll {
  display: flex;
  flex: 1;
  justify-content: flex-end;
  padding-right: 17px;
  background: linear-gradient(90deg, #8fb1dd 20%, #7f9fce);
}
.hscroll svg {
  width: 48px;
  height: 12px;
}
.status {
  display: flex;
  align-items: flex-end;
  justify-content: space-between;
  height: 6px;
  padding-left: 33px;
  background: #c9dcf4;
  overflow: hidden;
}
.macro {
  width: 14px;
  height: 5px;
}
.views {
  display: flex;
  width: 220px;
  height: 5px;
  padding-left: 5px;
  border-left: 2px solid #8ba6cf;
}
.views svg {
  flex: none;
  width: 50px;
  height: 5px;
}
.pct {
  width: 34px;
  padding-left: 6px;
  line-height: 12px;
}
.views .zoomer {
  width: 124px;
}

.callout {
  position: absolute;
  z-index: 1;
  width: 58px;
  height: 60px;
  border: 2px solid #000;
  border-radius: 50%;
  background: rgba(32, 125, 120, 0.3);
  font: bold 24px/62px "Open Sans", "Noto Sans", sans-serif;
  text-align: center;
}
.pointer {
  position: absolute;
  left: 157px;
  top: 382px;
  width: 34px;
  height: 82px;
}
</style>
